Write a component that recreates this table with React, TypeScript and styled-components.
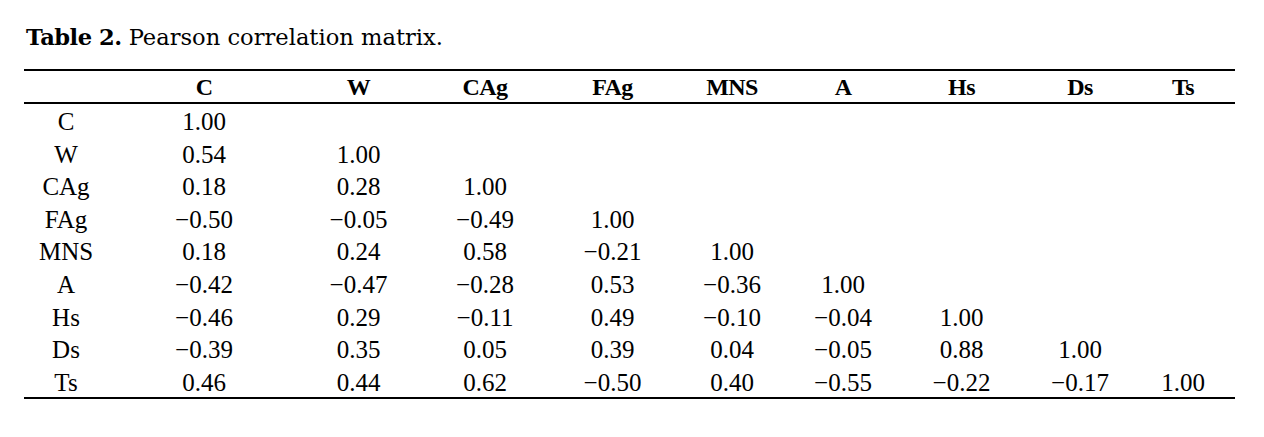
import styled, { createGlobalStyle } from "styled-components";

const GlobalStyle = createGlobalStyle`
  html, body {
    margin: 0;
    padding: 0;
    background: #ffffff;
  }
  body {
    color: #000000;
  }
`;

const labels = ["C", "W", "CAg", "FAg", "MNS", "A", "Hs", "Ds", "Ts"];

// lower triangle of the matrix, row by row
const matrix: string[][] = [
  ["1.00"],
  ["0.54", "1.00"],
  ["0.18", "0.28", "1.00"],
  ["−0.50", "−0.05", "−0.49", "1.00"],
  ["0.18", "0.24", "0.58", "−0.21", "1.00"],
  ["−0.42", "−0.47", "−0.28", "0.53", "−0.36", "1.00"],
  ["−0.46", "0.29", "−0.11", "0.49", "−0.10", "−0.04", "1.00"],
  ["−0.39", "0.35", "0.05", "0.39", "0.04", "−0.05", "0.88", "1.00"],
  ["0.46", "0.44", "0.62", "−0.50", "0.40", "−0.55", "−0.22", "−0.17", "1.00"],
];

const colWidths = [84, 192, 117, 136, 119, 120, 102, 135, 102, 104];

export default function App() {
  return (
    <Page>
      <GlobalStyle />
      <Caption>
        <strong>Table 2.</strong> Pearson correlation matrix.
      </Caption>
      <Matrix>
        <colgroup>
          {colWidths.map((w, idx) => (
            <col key={idx} style={{ width: w }} />
          ))}
        </colgroup>
        <thead>
          <HeadRow>
            <HeadCell />
            {labels.map((l) => (
              <HeadCell key={l}>{l}</HeadCell>
            ))}
          </HeadRow>
        </thead>
        <tbody>
          {labels.map((l, rIdx) => (
            <BodyRow key={l}>
              <Cell>{l}</Cell>
              {labels.map((_, cIdx) => (
                <Cell key={cIdx}>{matrix[rIdx][cIdx] ?? ""}</Cell>
              ))}
            </BodyRow>
          ))}
        </tbody>
      </Matrix>
    </Page>
  );
}

const Page = styled.div`
  padding: 24px 0 0 24px;
  width: 1211px;
`;

const Caption = styled.div`
  font-family: "DejaVu Serif", "Liberation Serif", serif;
  font-size: 22.6px;
  line-height: 26px;
  padding-left: 2px;
  margin-bottom: 19px;
  strong {
    font-weight: 700;
    letter-spacing: -0.5px;
  }
`;

const Matrix = styled.table`
  width: 1211px;
  table-layout: fixed;
  border-collapse: collapse;
  border-spacing: 0;
  border-bottom: 2px solid #000;
`;

const HeadRow = styled.tr`
  border-top: 2px solid #000;
  border-bottom: 2px solid #000;
`;

const HeadCell = styled.th`
  font-family: "Liberation Serif", serif;
  font-weight: 700;
  font-size: 24px;
  line-height: 27px;
  padding: 3px 0 1px;
  text-align: center;
  letter-spacing: -0.6px;
`;

const BodyRow = styled.tr``;

const Cell = styled.td`
  font-family: "Liberation Serif", serif;
  font-size: 25px;
  line-height: 28.6px;
  padding: 4px 0 0;
  text-align: center;
  white-space: nowrap;
`;
